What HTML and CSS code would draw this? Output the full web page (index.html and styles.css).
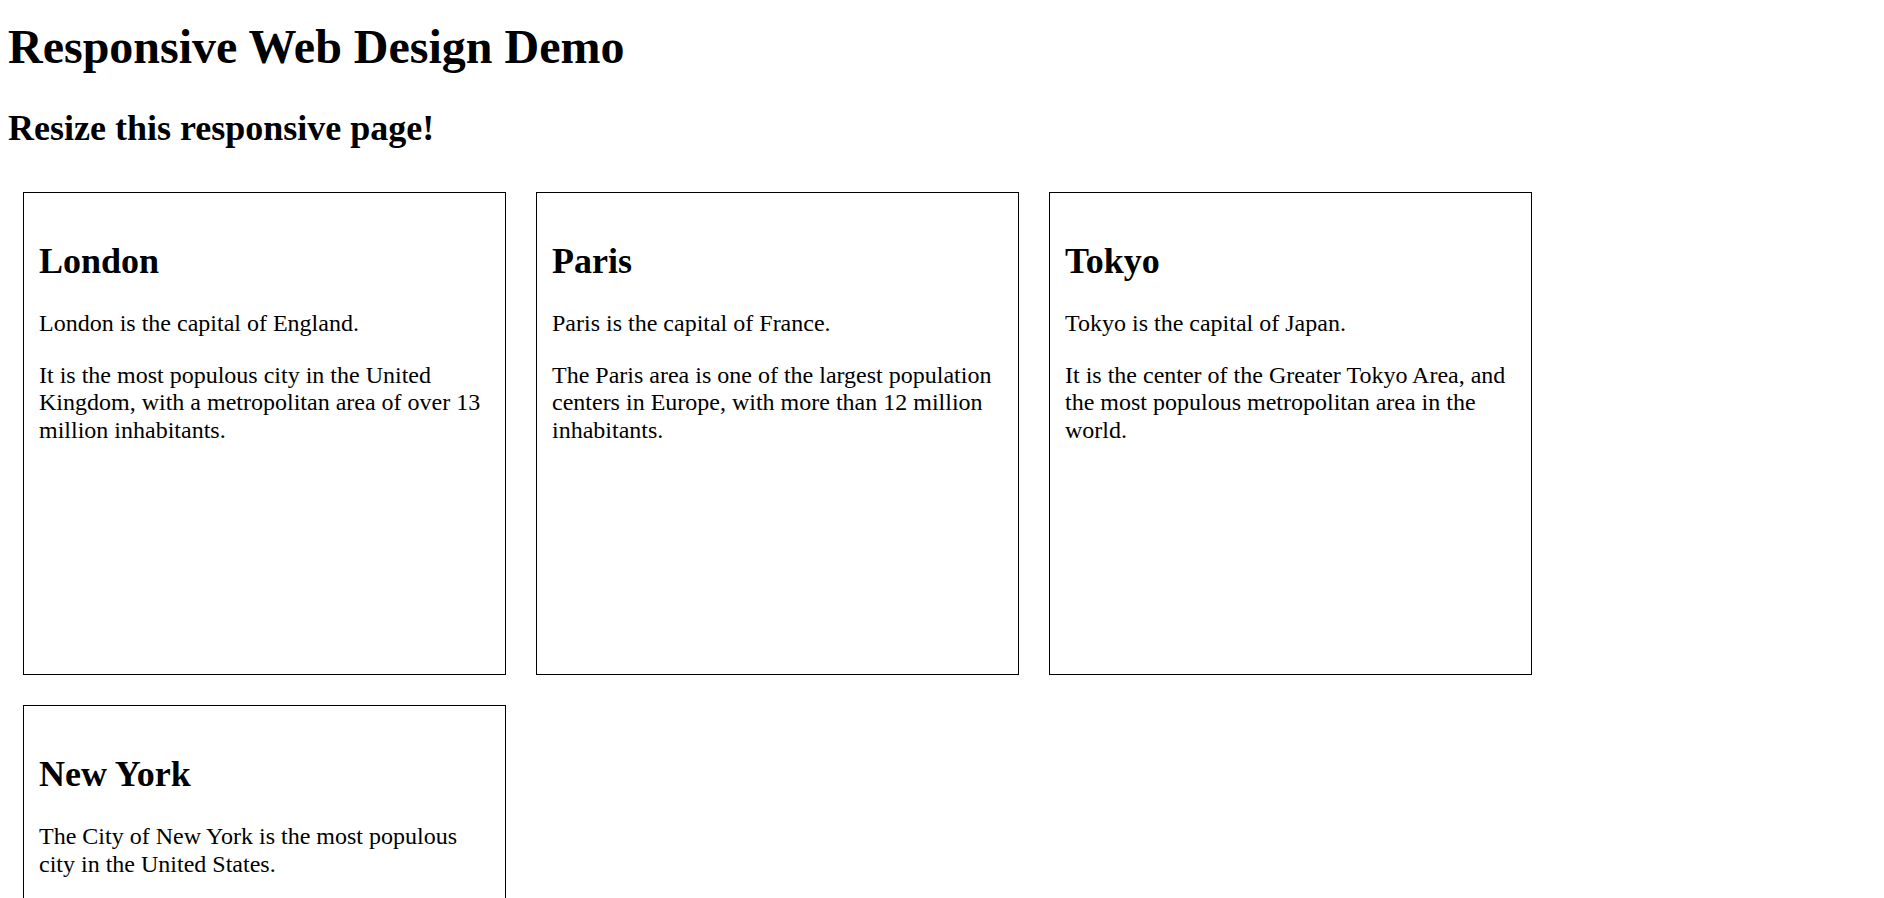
FILE: index.html
```html
<!DOCTYPE html>
<html lang="en">
<head>
<meta charset="utf-8">
<title>Responsive Web Design Demo</title>
<link rel="stylesheet" href="styles.css">
</head>
<body>
<h1 class="title">Responsive Web Design Demo</h1>
<h2 class="subtitle">Resize this responsive page!</h2>
<div class="cities">
  <div class="city">
    <h2 class="city-name">London</h2>
    <p class="city-text">London is the capital of England.</p>
    <p class="city-text">It is the most populous city in the United Kingdom, with a metropolitan area of over 13 million inhabitants.</p>
  </div>
  <div class="city">
    <h2 class="city-name">Paris</h2>
    <p class="city-text">Paris is the capital of France.</p>
    <p class="city-text">The Paris area is one of the largest population centers in Europe, with more than 12 million inhabitants.</p>
  </div>
  <div class="city">
    <h2 class="city-name">Tokyo</h2>
    <p class="city-text">Tokyo is the capital of Japan.</p>
    <p class="city-text">It is the center of the Greater Tokyo Area, and the most populous metropolitan area in the world.</p>
  </div>
  <div class="city">
    <h2 class="city-name">New York</h2>
    <p class="city-text">The City of New York is the most populous city in the United States.</p>
  </div>
</div>
</body>
</html>
```
FILE: styles.css
```css
html, body {
  background: #ffffff;
}
body {
  margin: 8px;
  font-family: "Liberation Serif", "Times New Roman", serif;
  color: #000000;
}
.title {
  font-size: 48px;
  font-weight: bold;
  line-height: 1.15;
  margin: 11px 0 34px 0;
}
.subtitle {
  font-size: 36px;
  font-weight: bold;
  line-height: 1.15;
  margin: 34px 0 27px 0;
}
.cities {
  display: flex;
  flex-wrap: wrap;
  gap: 30px 30px;
  padding: 15px;
}
.city {
  box-sizing: border-box;
  width: 483px;
  height: 483px;
  padding: 15px;
  border: 1px solid #000000;
  overflow: hidden;
}
.city-name {
  font-size: 36px;
  font-weight: bold;
  line-height: 1.15;
  margin: 33px 0 28px 0;
}
.city-text {
  font-size: 24px;
  line-height: 1.15;
  margin: 24px 0;
}
```
